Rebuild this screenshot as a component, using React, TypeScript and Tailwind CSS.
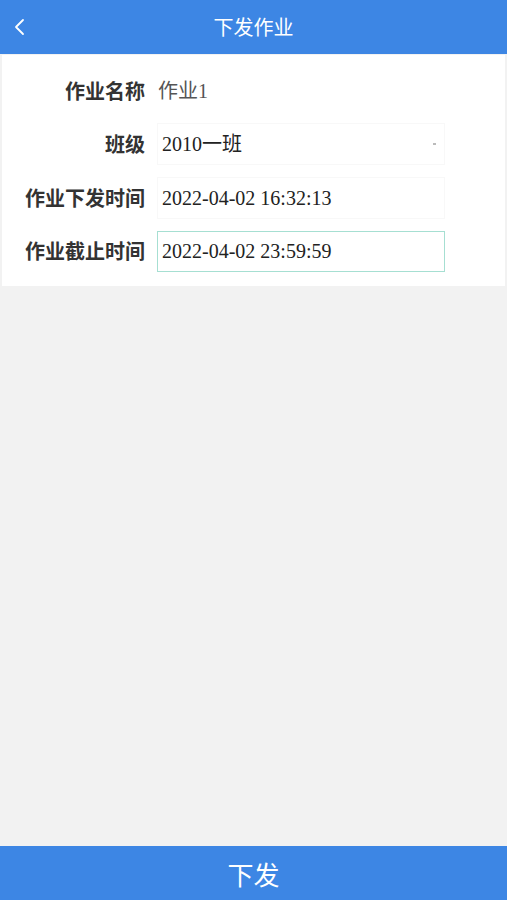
export default function App() {
  const rows = [
    { label: '作业名称', value: '作业1', kind: 'plain' },
    { label: '班级', value: '2010一班', kind: 'select' },
    { label: '作业下发时间', value: '2022-04-02 16:32:13', kind: 'input' },
    { label: '作业截止时间', value: '2022-04-02 23:59:59', kind: 'focus' },
  ];

  return (
    <div className="flex h-[900px] w-[507px] flex-col bg-[#f2f2f2] font-['Noto_Sans_CJK_SC',sans-serif]">
      <header className="relative flex h-[54px] shrink-0 items-center justify-center bg-[#3d86e4] text-white">
        <svg className="absolute left-[13px] top-[18px]" width="12" height="18" viewBox="0 0 12 18" fill="none">
          <path d="M10 2L3 9l7 7" stroke="white" strokeWidth="1.8" strokeLinecap="round" strokeLinejoin="round" />
        </svg>
        <h1 className="text-[20px] leading-none">下发作业</h1>
      </header>

      <div className="mx-[2px] mt-px bg-white pb-[8px] pt-[9px]">
        {rows.map((r) => (
          <div key={r.label} className="flex h-[53.5px] items-center">
            <div className="w-[143px] shrink-0 text-right text-[20px] font-bold text-[#333]">{r.label}</div>
            {r.kind === 'plain' ? (
              <div className="ml-[13px] font-['Liberation_Serif','Noto_Sans_CJK_SC',serif] text-[20px] text-[#555]">{r.value}</div>
            ) : (
              <div
                className={
                  r.kind === 'focus'
                    ? "relative ml-[12px] flex h-[41px] w-[288px] items-center border border-[#a6dfd2] px-[4px] font-['Liberation_Serif','Noto_Sans_CJK_SC',serif] text-[20px] text-[#222]"
                    : "relative ml-[12px] flex h-[42px] w-[288px] items-center border border-[#f8f8f8] px-[4px] font-['Liberation_Serif','Noto_Sans_CJK_SC',serif] text-[20px] text-[#222]"
                }
              >
                {r.value}
                {r.kind === 'select' && <span className="absolute right-[8px] top-[19px] h-[2px] w-[3px] bg-[#bbb]" />}
              </div>
            )}
          </div>
        ))}
      </div>

      <div className="flex-1" />

      <button className="flex h-[54px] shrink-0 items-center justify-center bg-[#3d86e4] text-[26px] text-white">下发</button>
    </div>
  );
}
